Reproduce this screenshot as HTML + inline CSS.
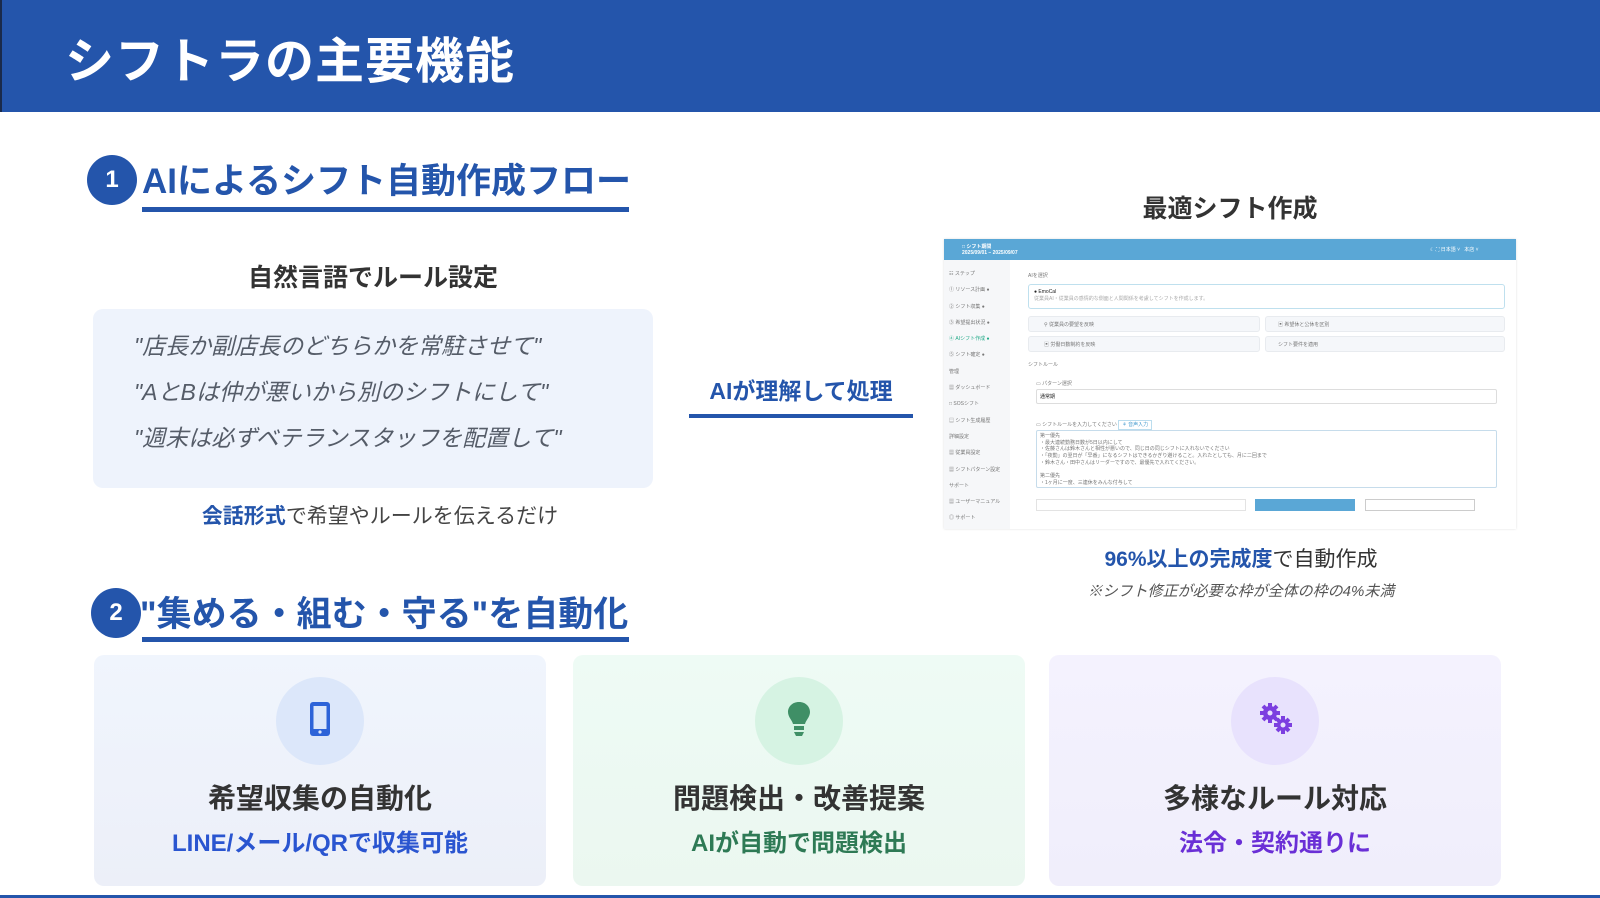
<!DOCTYPE html>
<html><head><meta charset="utf-8"><style>
*{margin:0;padding:0;box-sizing:border-box}
body{width:1600px;height:898px;overflow:hidden;background:#fff;font-family:"Liberation Sans","Noto Sans CJK JP",sans-serif;position:relative;color:#333}
.a{position:absolute}
.hdr{left:0;top:0;width:1600px;height:112px;background:#2455ab;border-left:2px solid #1a2a4a}
.hdr h1{position:absolute;left:63px;top:22px;font-size:49px;color:#fff;font-weight:700;letter-spacing:1px}
.num{width:50px;height:50px;border-radius:50%;background:#2455ab;color:#fff;font-weight:700;font-size:24px;text-align:center;line-height:50px}
.h2{font-size:35px;font-weight:700;color:#2455ab;white-space:nowrap}
.ul{background:#2455ab;height:5px}
.c{text-align:center;white-space:nowrap}
.q{font-style:italic;color:#555c68;font-size:23px;left:134px;white-space:nowrap}
.card{top:655px;height:231px;width:452px;border-radius:10px}
.ic{width:88px;height:88px;border-radius:50%;left:182px;top:22px}
.ct{top:122px;width:100%;font-size:28px;font-weight:700;color:#333}
.cs{top:168px;width:100%;font-size:24px;font-weight:700}
.ss{font-size:5px;color:#777;white-space:nowrap}
.sb{background:#f5f7fa;border:1px solid #e8ebef;border-radius:3px}
</style></head><body>
<div class="a hdr"><h1>シフトラの主要機能</h1></div>

<div class="a num" style="left:87px;top:155px">1</div>
<div class="a h2" style="left:142px;top:153px">AIによるシフト自動作成フロー</div>
<div class="a ul" style="left:142px;top:207px;width:487px"></div>

<div class="a c" style="left:193px;width:360px;top:258px;font-size:25px;font-weight:700;color:#333">自然言語でルール設定</div>
<div class="a" style="left:93px;top:309px;width:560px;height:179px;background:#eef3fc;border-radius:10px"></div>
<div class="a q" style="top:327px">"店長か副店長のどちらかを常駐させて"</div>
<div class="a q" style="top:373px">"AとBは仲が悪いから別のシフトにして"</div>
<div class="a q" style="top:419px">"週末は必ずベテランスタッフを配置して"</div>
<div class="a c" style="left:173px;width:414px;top:500px;font-size:21px;color:#444"><b style="color:#2455ab">会話形式</b>で希望やルールを伝えるだけ</div>

<div class="a c" style="left:689px;width:224px;top:372px;font-size:23px;font-weight:700;color:#2455ab">AIが理解して処理</div>
<div class="a ul" style="left:689px;top:414px;width:224px;height:4px"></div>

<div class="a c" style="left:1080px;width:300px;top:189px;font-size:25px;font-weight:700;color:#333">最適シフト作成</div>

<div class="a" style="left:944px;top:239px;width:572px;height:290px;background:#fff;overflow:hidden;box-shadow:0 0 2px #ddd">
 <div class="a" style="left:0;top:0;width:572px;height:21px;background:#5aa7d6"></div>
 <div class="a ss" style="left:18px;top:4px;color:#fff;font-weight:700">□ シフト期間<br>2025/09/01 – 2025/09/07</div>
 <div class="a ss" style="left:486px;top:7px;color:#fff">☾ ⛶ 日本語 ˅ &nbsp; 本店 ˅</div>
 <div class="a" style="left:0;top:21px;width:66px;height:269px;background:#f6f7f9"></div>
 <div class="a ss" style="left:5px;top:27px;line-height:16.3px">☷ ステップ<br>① リソース計画 ●<br>② シフト収集 ●<br>③ 希望提出状況 ●<br><span style="color:#2a8">④ AIシフト作成 ●</span><br>⑤ シフト確定 ●<br>管理<br>▦ ダッシュボード<br>□ SOSシフト<br>▤ シフト生成履歴<br>詳細設定<br>▦ 従業員設定<br>▦ シフトパターン設定<br>サポート<br>▦ ユーザーマニュアル<br>◎ サポート<br>管理者向け</div>
 <div class="a" style="left:72px;top:28px;width:496px;height:262px;background:#fff"></div>
 <div class="a ss" style="left:84px;top:33px">AIを選択</div>
 <div class="a" style="left:84px;top:45px;width:477px;height:25px;border:1px solid #bfe0ee;border-radius:3px"></div>
 <div class="a ss" style="left:90px;top:50px;color:#222">● EmoCal<br><span style="color:#aaa">従業員AI・従業員の感情的な側面と人間関係を考慮してシフトを作成します。</span></div>
 <div class="a sb" style="left:84px;top:77px;width:232px;height:16px"></div>
 <div class="a sb" style="left:321px;top:77px;width:240px;height:16px"></div>
 <div class="a sb" style="left:84px;top:97px;width:232px;height:16px"></div>
 <div class="a sb" style="left:321px;top:97px;width:240px;height:16px"></div>
 <div class="a ss" style="left:100px;top:82px">⚲ 従業員の要望を反映</div>
 <div class="a ss" style="left:334px;top:82px">▣ 希望休と公休を区別</div>
 <div class="a ss" style="left:100px;top:102px">▣ 労働日数制約を反映</div>
 <div class="a ss" style="left:334px;top:102px">シフト要件を適用</div>
 <div class="a ss" style="left:84px;top:122px">シフトルール</div>
 <div class="a ss" style="left:92px;top:141px">▭ パターン選択</div>
 <div class="a" style="left:92px;top:150px;width:461px;height:15px;border:1px solid #ddd;border-radius:2px"></div>
 <div class="a ss" style="left:96px;top:154px;color:#222">通常期</div>
 <div class="a ss" style="left:92px;top:182px">▭ シフトルールを入力してください <span style="border:1px solid #bde;color:#4a9ed0;padding:1px 3px">⚘ 音声入力</span></div>
 <div class="a" style="left:92px;top:191px;width:461px;height:58px;border:1px solid #c6dceb;border-radius:2px"></div>
 <div class="a ss" style="left:96px;top:194px;line-height:6.7px">第一優先<br>・最大連続勤務日数が5日以内にして<br>・佐藤さんは鈴木さんと相性が悪いので、同じ日の同じシフトに入れないでください<br>・「夜勤」の翌日が「早番」になるシフトはできるかぎり避けること。入れたとしても、月に二回まで<br>・鈴木さん・田中さんはリーダーですので、最優先で入れてください。<br><br>第二優先<br>・1ヶ月に一度、三連休をみんな付与して</div>
 <div class="a" style="left:92px;top:260px;width:210px;height:12px;border:1px solid #e3e3e3"></div>
 <div class="a" style="left:311px;top:260px;width:100px;height:12px;background:#5aa7d6"></div>
 <div class="a" style="left:421px;top:260px;width:110px;height:12px;border:1px solid #ccc"></div>
</div>

<div class="a c" style="left:1040px;width:402px;top:543px;font-size:21px;color:#333"><b style="color:#2455ab">96%以上の完成度</b>で自動作成</div>
<div class="a c" style="left:1040px;width:402px;top:580px;font-size:15px;font-style:italic;color:#555">※シフト修正が必要な枠が全体の枠の4%未満</div>

<div class="a num" style="left:91px;top:588px">2</div>
<div class="a h2" style="left:140px;top:586px">"集める・組む・守る"を自動化</div>
<div class="a ul" style="left:142px;top:637px;width:487px"></div>

<div class="a card" style="left:94px;background:linear-gradient(#f0f5fd,#eceff8)">
 <div class="a ic" style="background:#dce7fa;left:182px"><svg width="88" height="88"><rect x="34" y="25" width="20" height="34" rx="3" fill="#2d63d8"/><rect x="37.5" y="29" width="13" height="23" fill="#dce7fa"/><circle cx="44" cy="55" r="1.6" fill="#dce7fa"/></svg></div>
 <div class="a ct c">希望収集の自動化</div>
 <div class="a cs c" style="color:#2a55d0">LINE/メール/QRで収集可能</div>
</div>
<div class="a card" style="left:573px;background:linear-gradient(#eefbf5,#ebf7f0)">
 <div class="a ic" style="background:#d6f3e3;left:182px"><svg width="88" height="88"><path d="M44 25c-7 0-11 5-11 10 0 5 4 8 5 12h12c1-4 5-7 5-12 0-5-4-10-11-10z" fill="#3f8f66"/><rect x="39" y="49" width="10" height="4" fill="#3f8f66"/><path d="M39 55h10l-2 4h-6z" fill="#3f8f66"/></svg></div>
 <div class="a ct c">問題検出・改善提案</div>
 <div class="a cs c" style="color:#2e7a55">AIが自動で問題検出</div>
</div>
<div class="a card" style="left:1049px;background:linear-gradient(#f4f2fe,#f0eefb)">
 <div class="a ic" style="background:#e8e2fd;left:182px"><svg width="88" height="88"><g fill="#7c3fe0"><circle cx="39" cy="36" r="7"/><circle cx="52" cy="48" r="6"/></g><g stroke="#7c3fe0" stroke-width="4"><path d="M39 26v20M29 36h20M32 29l14 14M46 29l-14 14"/><path d="M52 39v18M43 48h18M46 42l12 12M58 42l-12 12"/></g><circle cx="39" cy="36" r="2.5" fill="#e8e2fd"/><circle cx="52" cy="48" r="2.5" fill="#e8e2fd"/></svg></div>
 <div class="a ct c">多様なルール対応</div>
 <div class="a cs c" style="color:#6a2fd6">法令・契約通りに</div>
</div>
<div class="a" style="left:0;top:895px;width:1600px;height:3px;background:#2455ab"></div>
</body></html>
